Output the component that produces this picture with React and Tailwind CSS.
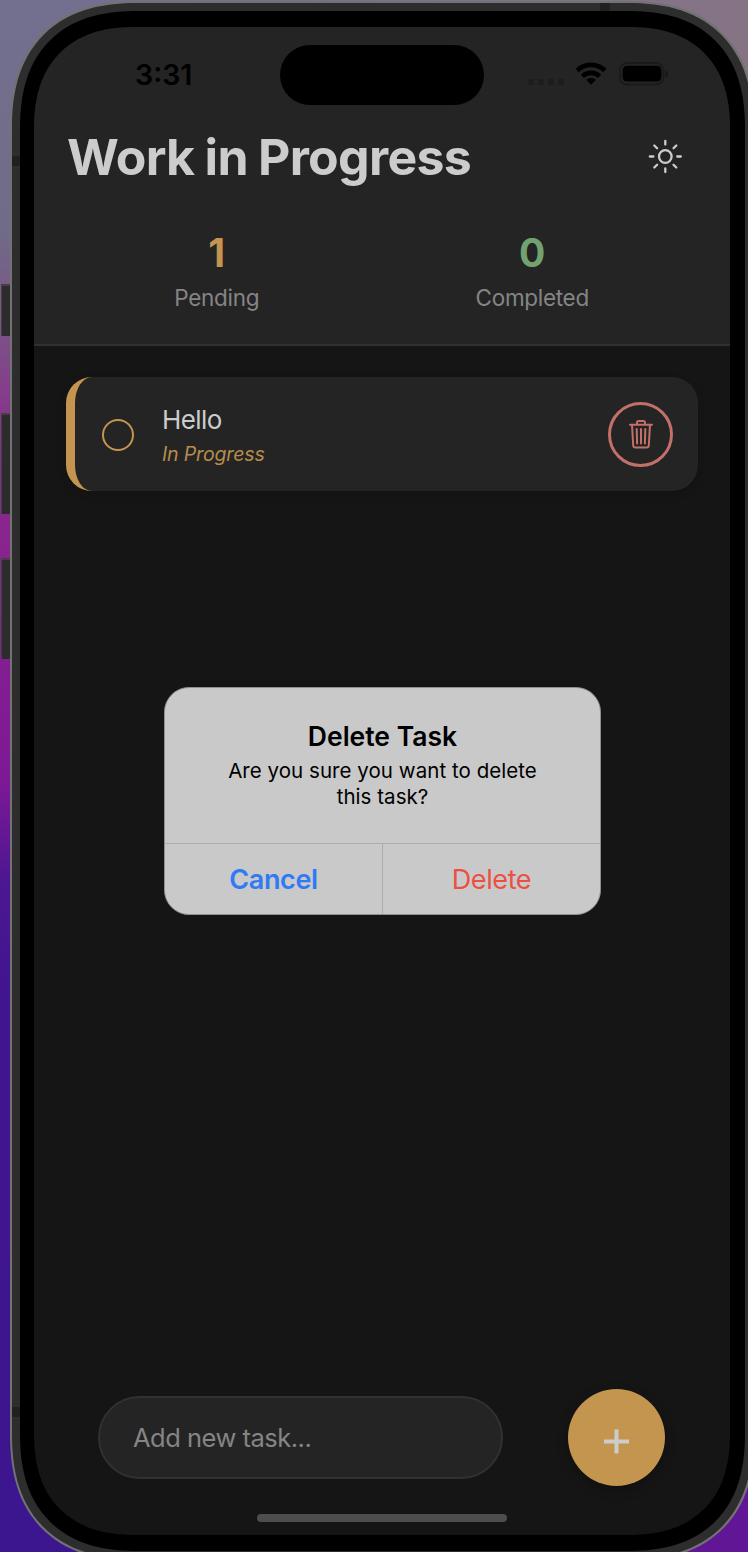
function StatusBar() {
  return (
    <div className="flex h-[95px] items-start">
      <div className="w-[246px] pl-[101px] pt-[33px] text-[28.500px] font-semibold leading-[30px] text-black">
        3:31
      </div>
      <div className="mt-[18px] h-[60px] w-[204px] rounded-full bg-black" />
      <div className="flex items-start">
        <div className="ml-[44px] mt-[52px] flex gap-[4px]">
          <i className="size-[6px] rounded-[2px] bg-[#1d1d1d]" />
          <i className="size-[6px] rounded-[2px] bg-[#1d1d1d]" />
          <i className="size-[6px] rounded-[2px] bg-[#1d1d1d]" />
          <i className="size-[6px] rounded-[2px] bg-[#1d1d1d]" />
        </div>
        <svg className="ml-[11px] mt-[35px]" width="32" height="23" viewBox="0 0 32 23" fill="none" stroke="#000" strokeWidth="4.600">
          <path d="M2.200 8.500a19.800 19.800 0 0 1 27.600 0" />
          <path d="M7.400 14.300a12.400 12.400 0 0 1 17.200 0" />
          <path d="M16 22.700l-4.800-4.900a7 7 0 0 1 9.600 0z" fill="#000" stroke="none" />
        </svg>
        <svg className="ml-[12px] mt-[35px]" width="50" height="24" viewBox="0 0 50 24">
          <rect x="1" y="1" width="43.500" height="21.500" rx="7" fill="none" stroke="#1a1a1a" strokeWidth="1.800" />
          <rect x="3.600" y="3.800" width="38.800" height="15.800" rx="4.500" fill="#000" />
          <path d="M46.500 8c3.400 1.300 3.400 6.300 0 7.600z" fill="#171717" />
        </svg>
      </div>
    </div>
  );
}

function SunIcon() {
  return (
    <svg width="36" height="36" viewBox="0 0 36 36" fill="none" stroke="#cccccc" strokeWidth="2.300" strokeLinecap="round">
      <circle cx="18.300" cy="17.500" r="6.300" />
      <path d="M18.300 2v3.600M18.300 29.400V33M2.800 17.500h3.600M30.200 17.500h3.600M7.300 6.500l2.800 2.800M26.500 25.700l2.800 2.800M7.300 28.500l2.800-2.800M26.500 9.300l2.800-2.800" />
    </svg>
  );
}

function TrashIcon() {
  return (
    <svg width="26" height="30" viewBox="0 0 26 30" fill="none" stroke="#c27068" strokeWidth="2" strokeLinecap="round" strokeLinejoin="round">
      <path d="M2 5.800h22M4 5.800l1.200 20.700a2.200 2.200 0 0 0 2.200 2h11.200a2.200 2.200 0 0 0 2.200-2L22 5.800M9 5.800V3.500a1.600 1.600 0 0 1 1.600-1.600h4.800A1.600 1.600 0 0 1 17 3.500v2.300M8.700 10l.4 14.500M13 10v14.500M17.300 10l-.4 14.500" />
    </svg>
  );
}

function Stat({ value, label, color }) {
  return (
    <div className="flex flex-1 flex-col items-center">
      <span className={"text-[39px] font-bold leading-[48px] " + color}>{value}</span>
      <span className="mt-[6px] text-[22.500px] leading-[30px] tracking-[-0.3px] text-[#858585]">{label}</span>
    </div>
  );
}

function Header() {
  return (
    <header className="h-[319px] border-b-2 border-[#303030] bg-[#242424]">
      <StatusBar />
      <div className="flex h-[70px] items-center justify-between pl-[33px] pr-[47px]">
        <h1 className="whitespace-nowrap text-[50px] font-bold leading-[60px] tracking-[-0.7px] text-[#cccccc] [word-spacing:-1px]">
          Work in Progress
        </h1>
        <SunIcon />
      </div>
      <div className="flex pl-[25px] pr-[40px] pt-[37px]">
        <Stat value="1" label="Pending" color="text-[#c4954f]" />
        <Stat value="0" label="Completed" color="text-[#72a26f]" />
      </div>
    </header>
  );
}

function TaskCard() {
  return (
    <div className="mx-[32px] mt-[31px] flex h-[114px] items-center rounded-[26px] border-l-[9px] border-[#c4954f] bg-[#242424] pl-[27px] pr-[25px] shadow-[0_3px_10px_rgba(0,0,0,0.12)]">
      <span className="mt-px size-[32px] rounded-full border-[2.500px] border-[#c4954f]" />
      <div className="ml-[28px] mt-[2px] flex-1">
        <p className="text-[26px] leading-[32px] tracking-[-0.6px] text-[#cccccc]">Hello</p>
        <p className="mt-[5px] text-[19.500px] italic leading-[26px] tracking-[-0.15px] text-[#b88c4b]">In Progress</p>
      </div>
      <button className="flex size-[65px] items-center justify-center rounded-full border-[3px] border-[#c27068]">
        <TrashIcon />
      </button>
    </div>
  );
}

function DeleteDialog() {
  return (
    <div className="absolute left-[130px] top-[660px] flex h-[228px] w-[437px] flex-col overflow-hidden rounded-[25px] border border-[#8f8f8f] bg-[#c9c9c9] text-center">
      <div className="h-[155px] shrink-0 pt-[32px] text-black">
        <h2 className="text-[26.500px] font-semibold leading-[33px]">Delete Task</h2>
        <p className="mt-[5px] text-[20.500px] leading-[26px] tracking-[0.05px]">
          Are you sure you want to delete
          <br />
          this task?
        </p>
      </div>
      <div className="flex flex-1 border-t border-[#adadad] text-[27px] leading-[72px] tracking-[-0.4px]">
        <button className="flex-1 border-r border-[#adadad] font-semibold text-[#307af5]">Cancel</button>
        <button className="flex-1 text-[#ec5042]">Delete</button>
      </div>
    </div>
  );
}

function Composer() {
  return (
    <div className="flex items-center pl-[64px] pr-[65px]">
      <div className="flex h-[83px] w-[405px] items-center rounded-full border-2 border-[#313131] bg-[#242424] pl-[33px] pt-px text-[25.500px] tracking-[-0.500px] text-[#858585]">
        Add new task...
      </div>
      <button className="ml-auto flex size-[97px] items-center justify-center rounded-full bg-[#c4954f] shadow-[0_4px_12px_rgba(0,0,0,0.25)]">
        <svg className="mt-[7px]" width="25" height="25" viewBox="0 0 25 25" stroke="#cccccc" strokeWidth="4">
          <path d="M0 12.500h25M12.500 .5v24" />
        </svg>
      </button>
    </div>
  );
}

export default function App() {
  return (
    <div className="relative h-[1552px] w-[748px] overflow-hidden bg-[linear-gradient(180deg,#73708f_0px,#706b88_230px,#7c5287_330px,#8b2b8c_450px,#871f91_620px,#7d1995_780px,#4d1692_880px,#40158f_1000px,#40158f_1250px,#3b168e_1552px)] font-['Inter','Liberation_Sans',sans-serif]">
      <div className="absolute right-0 top-0 h-[300px] w-[600px] bg-[linear-gradient(90deg,transparent,#867485)]" />
      <div className="absolute bottom-0 right-0 h-[300px] w-[300px] bg-[#611795]" />
      <div className="absolute left-[1px] top-[284px] h-[52px] w-[12px] border-l border-t-2 border-[#444044] bg-[#2b2c2b]" />
      <div className="absolute left-[1px] top-[413px] h-[101px] w-[12px] border-l border-t-2 border-[#444044] bg-[#2b2c2b]" />
      <div className="absolute left-[1px] top-[558px] h-[101px] w-[12px] border-l border-t-2 border-[#444044] bg-[#2b2c2b]" />
      <div className="relative ml-[10px] mt-[1px] h-[1560px] w-[745px] rounded-[128px] border-2 border-[#727272] bg-[#2d2d2d] p-[8px] [corner-shape:superellipse(1.26)]">
        <div className="absolute left-[588px] top-0 h-[9px] w-[10px] bg-[#202020]" />
        <div className="absolute left-0 top-[153px] h-[10px] w-[9px] bg-[#202020]" />
        <div className="absolute left-0 top-[1404px] h-[10px] w-[9px] bg-[#202020]" />
        <div className="relative h-full rounded-[118px] bg-black pb-[16px] pl-[14px] pr-[15px] pt-[16px] [corner-shape:superellipse(1.26)]">
          <main className="relative flex h-[1508px] w-[696px] flex-col overflow-hidden rounded-[103px] bg-[#151515] [corner-shape:superellipse(1.26)]">
            <Header />
            <TaskCard />
            <div className="flex-1" />
            <Composer />
            <div className="mx-auto mb-[13px] mt-[28px] h-[8px] w-[250px] rounded-full bg-[#4d4d4d]" />
            <DeleteDialog />
          </main>
        </div>
      </div>
    </div>
  );
}
